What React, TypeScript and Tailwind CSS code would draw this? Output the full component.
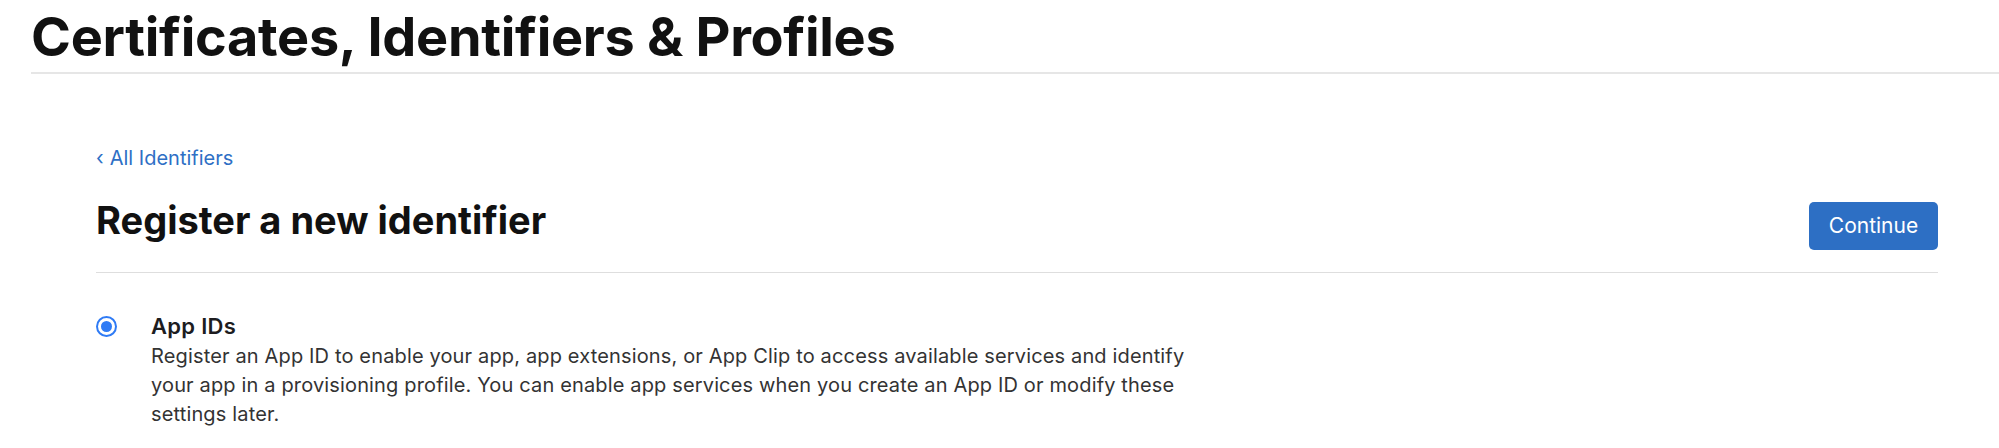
import React from 'react';

const font = { fontFamily: 'Inter, "Noto Sans", sans-serif' };

const RadioOption: React.FC<{ title: string; lines: string[]; checked?: boolean }> = ({ title, lines, checked }) => {
  return (
    <div className="flex items-start">
      <div className="mt-[4px] w-[21px] h-[21px] rounded-full border-2 border-[#2f7bf5] flex items-center justify-center shrink-0">
        {checked && <div className="w-[11px] h-[11px] rounded-full bg-[#2f7bf5]" />}
      </div>
      <div className="ml-[34px]">
        <div className="text-[22px] leading-[28px] font-semibold text-[#1d1d1f] tracking-[0.3px]">{title}</div>
        <p className="mt-[2px] text-[20px] leading-[29px] text-[#333333] tracking-[0.15px]">
          {lines.map((line, i) => (
            <React.Fragment key={i}>
              {line}
              {i < lines.length - 1 && <br />}
            </React.Fragment>
          ))}
        </p>
      </div>
    </div>
  );
};

export default function App() {
  return (
    <div className="w-[1999px] h-[448px] bg-white overflow-hidden" style={font}>
      <header className="pt-[10px] pl-[31px]">
        <h1 className="text-[54px] leading-[54px] font-bold text-[#111111] tracking-[-0.3px] pb-[8px] border-b-2 border-[#e6e6e6]">
          Certificates, Identifiers &amp; Profiles
        </h1>
      </header>

      <main className="pl-[96px] pr-[61px]">
        <a href="#" className="mt-[72px] flex items-center text-[20px] leading-[24px] text-[#2e6fc5]">
          <span className="mr-[6px]">‹</span>
          All Identifiers
        </a>

        <div className="mt-[28px] flex items-start justify-between pb-[22px] border-b border-[#dedede]">
          <h2 className="text-[38px] leading-[44px] font-bold text-[#111111]">
            Register a new identifier
          </h2>
          <button className="mt-[4px] h-[48px] w-[129px] rounded-[5px] bg-[#2d6fc4] text-white text-[21px]">
            Continue
          </button>
        </div>

        <div className="pt-[39px]">
          <RadioOption
            checked
            title="App IDs"
            lines={[
              'Register an App ID to enable your app, app extensions, or App Clip to access available services and identify',
              'your app in a provisioning profile. You can enable app services when you create an App ID or modify these',
              'settings later.',
            ]}
          />
        </div>
      </main>
    </div>
  );
}
